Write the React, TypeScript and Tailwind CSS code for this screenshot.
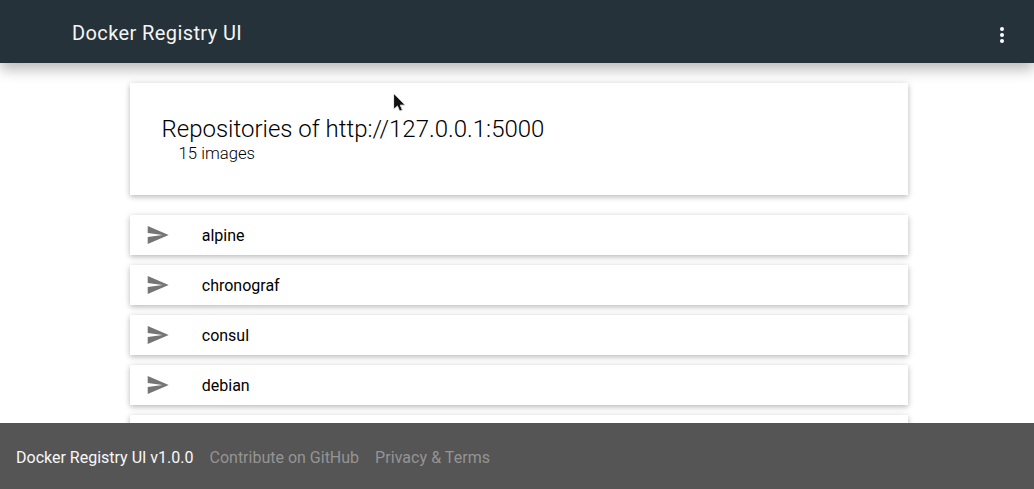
const repositories = ["alpine", "chronograf", "consul", "debian"];

function SendIcon() {
  return (
    <svg className="size-6 shrink-0 text-[#757575]" viewBox="0 0 24 24" fill="currentColor">
      <path d="M1.7 21L22.7 12 1.7 3v7l15 2-15 2z" />
    </svg>
  );
}

export default function App() {
  return (
    <div className="relative flex h-[489px] flex-col overflow-hidden bg-white font-['Roboto',sans-serif] text-black">
      <header className="z-10 flex h-[63px] shrink-0 items-center justify-between bg-[#25323a] pr-5 pl-[72px] text-[#f5f5f5] shadow-[0_6px_12px_rgba(0,0,0,0.18),0_6px_16px_rgba(0,0,0,0.12)]">
        <h1 className="pt-[3px] text-[20px] leading-7 tracking-[0.4px]">Docker Registry UI</h1>
        <svg className="mt-[7px] size-6 text-white" viewBox="0 0 24 24" fill="currentColor">
          <circle cx="12" cy="6" r="2" />
          <circle cx="12" cy="12" r="2" />
          <circle cx="12" cy="18" r="2" />
        </svg>
      </header>
      <main className="flex min-h-0 flex-1 flex-col overflow-hidden pt-5 pr-[126px] pl-[130px]">
        <section className="mb-5 h-28 shrink-0 bg-white px-8 pt-8 shadow-[0_2px_5px_rgba(0,0,0,0.2),0_1px_8px_rgba(0,0,0,0.1)]">
          <h2 className="-ml-px pl-[0.5px] text-[24px] leading-7 font-light">Repositories of http://127.0.0.1:5000</h2>
          <p className="pt-px pl-[16.6px] text-[16.7px] leading-5 font-light">15 images</p>
        </section>
        <ul className="flex flex-col gap-2.5">
          {repositories.map((name) => (
            <li key={name} className="flex h-10 shrink-0 items-center gap-[31.75px] bg-white pl-4 text-[16px] shadow-[0_2px_5px_rgba(0,0,0,0.2),0_1px_8px_rgba(0,0,0,0.1)]">
              <SendIcon />
              <span className="pt-0.5">{name}</span>
            </li>
          ))}
          <li className="h-10 shrink-0 bg-white shadow-[0_2px_5px_rgba(0,0,0,0.2),0_1px_8px_rgba(0,0,0,0.1)]" />
        </ul>
      </main>
      <footer className="z-10 flex h-[66px] shrink-0 items-center gap-4 bg-[#555] px-4 pt-[3px] text-[16px] text-[#949494]">
        <span className="text-[#f8f8f8]">Docker Registry UI v1.0.0</span>
        <a>Contribute on GitHub</a>
        <a className="tracking-[0.05px]">Privacy &amp; Terms</a>
      </footer>
      <svg className="absolute top-[92px] left-[393px] z-20 h-[20px] w-[14px]" viewBox="0 0 14 20">
        <path d="M1 2v15l3.5-3.2 2.3 5.2 2.5-1.1-2.2-4.9h5z" fill="#111" stroke="#ccc" strokeWidth="1" />
        <path d="M1.2 2.5v13.5l3.5-3 2.3 5 1.3-.6-2.3-5.1h4.4z" fill="#111" />
      </svg>
    </div>
  );
}
